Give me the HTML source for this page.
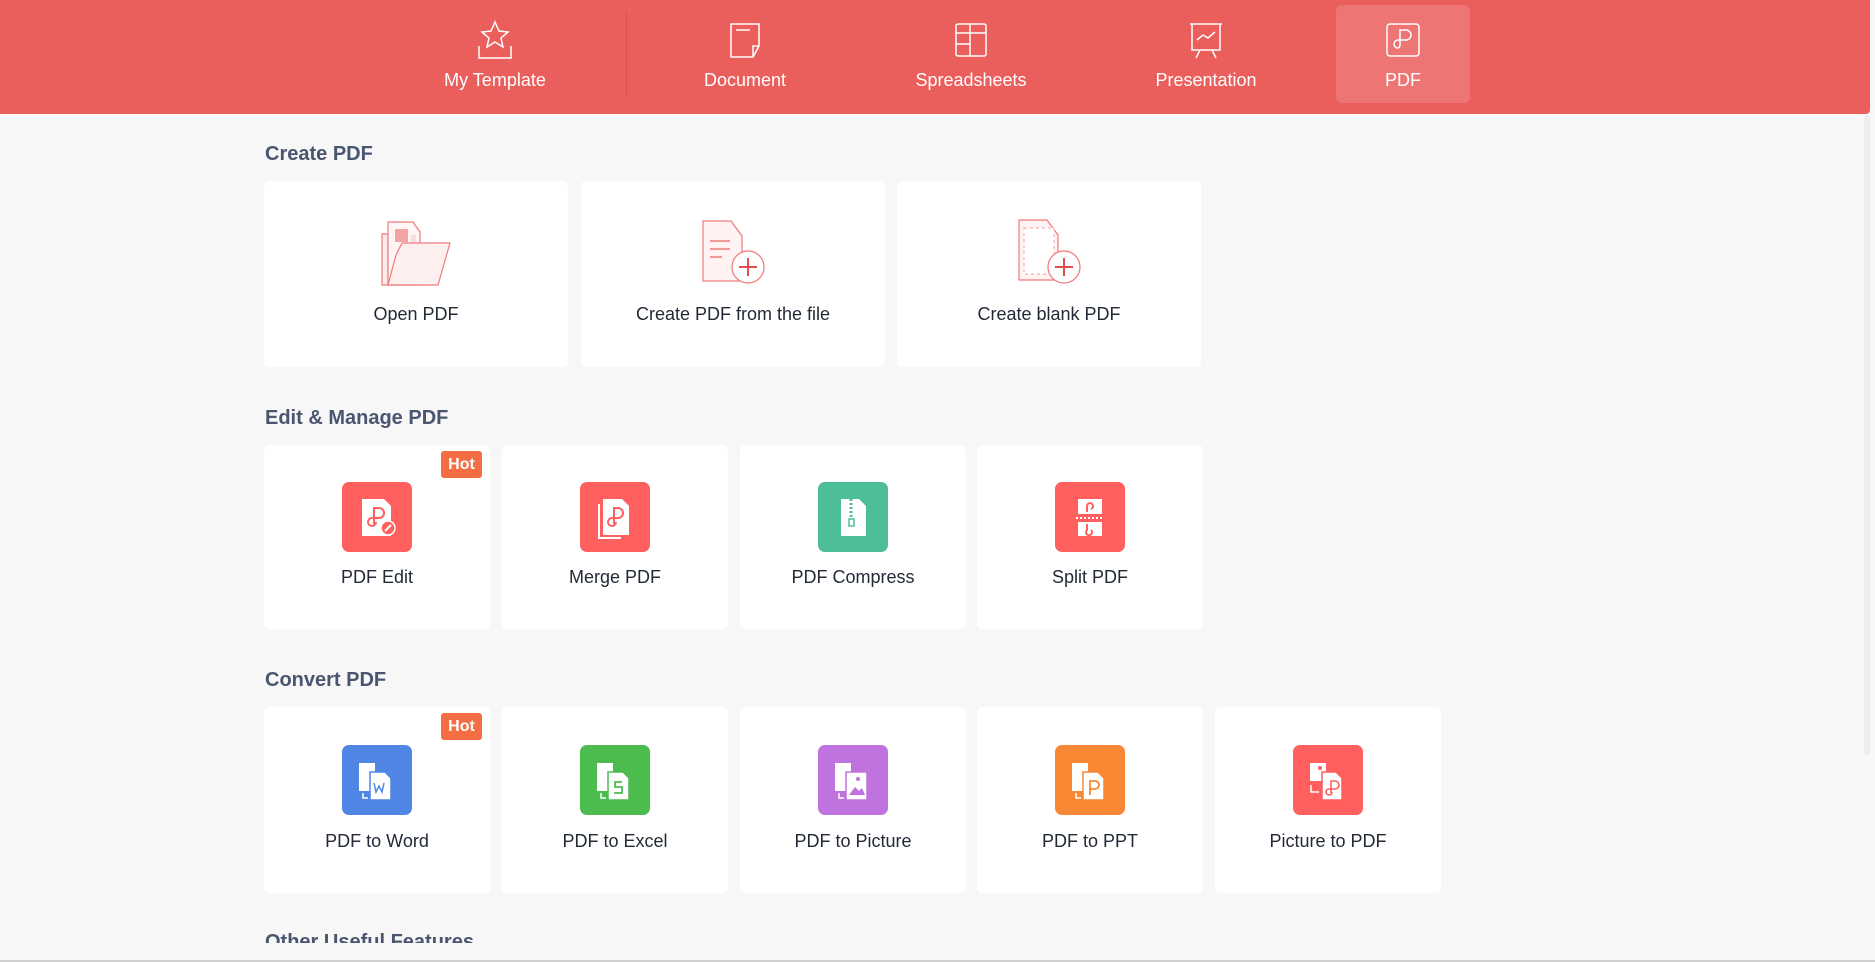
<!DOCTYPE html>
<html><head><meta charset="utf-8">
<style>
*{margin:0;padding:0;box-sizing:border-box}
html,body{width:1875px;height:962px;overflow:hidden;background:#f7f7f7;font-family:"Liberation Sans","DejaVu Sans",sans-serif}
#hdr{position:absolute;left:0;top:0;width:1870px;height:114px;background:#ea5e5c;border-bottom-right-radius:4px}
.nav{position:absolute;top:5px;height:98px;width:134px;color:#fff;text-align:center;font-size:18px}
.nav svg{position:absolute;left:50%;top:15px;margin-left:-17px}
.nav span{position:absolute;left:0;right:0;top:65px}
.nav.on{background:rgba(255,255,255,.15);border-radius:6px}
#div{position:absolute;left:626px;top:12px;width:1px;height:84px;background:rgba(0,0,0,.1)}
h2{position:absolute;left:265px;font-size:20px;font-weight:bold;color:#4a5670}
.card{position:absolute;background:#fff;border-radius:5px}
.card .lbl{position:absolute;left:0;right:0;text-align:center;font-size:18px;color:#222a36}
.ic{position:absolute;width:70px;height:70px;border-radius:7px;left:50%;margin-left:-35px;top:37px}
.ic svg{position:absolute;left:0;top:0}
.hot{position:absolute;right:8px;top:6px;width:41px;height:27px;background:#f46d43;border-radius:3px;color:#fff;font-size:16px;font-weight:bold;text-align:center;line-height:27px}
#sb{position:absolute;left:1864px;top:115px;width:6px;height:640px;background:#eee;border-radius:3px}
#bot{position:absolute;left:0;top:960px;width:1875px;height:2px;background:#d0d0d0}
</style></head><body>
<div id="hdr">
 <div class="nav" style="left:428px"><svg width="34" height="40" viewBox="0 0 34 40" fill="none" stroke="#fff" stroke-width="1.5"><path d="M17 2l4 9 9 1-7 6 2 9-8-5-8 5 2-9-7-6 9-1z"/><path d="M1 26v12h32V26"/></svg><span>My Template</span></div>
 <div id="div"></div>
 <div class="nav" style="left:678px"><svg width="34" height="40" viewBox="0 0 34 40" fill="none" stroke="#fff" stroke-width="1.5"><path d="M3 4h28v22l-6 11H3z"/><path d="M31 26h-6v11"/><path d="M8 10h14"/></svg><span>Document</span></div>
 <div class="nav" style="left:904px"><svg width="34" height="40" viewBox="0 0 34 40" fill="none" stroke="#fff" stroke-width="1.5"><rect x="2" y="4" width="30" height="32" rx="2"/><path d="M2 13h30M2 24h14M16 4v32"/></svg><span>Spreadsheets</span></div>
 <div class="nav" style="left:1139px"><svg width="34" height="40" viewBox="0 0 34 40" fill="none" stroke="#fff" stroke-width="1.5"><path d="M1 4h32M3 4v26h28V4M11 30l-4 8M23 30l4 8"/><path d="M8 20l6-5 5 3 7-6"/></svg><span>Presentation</span></div>
 <div class="nav on" style="left:1336px"><svg width="34" height="40" viewBox="0 0 34 40" fill="none" stroke="#fff" stroke-width="1.5"><rect x="1" y="4" width="32" height="32" rx="3"/><path d="M14 26V10h6a5 5 0 010 10h-8a4 4 0 100 8 4 4 0 002-4"/></svg><span>PDF</span></div>
</div>

<h2 style="top:143px">Create PDF</h2>
<div class="card" style="left:264px;top:181px;width:304px;height:186px">
 <svg style="position:absolute;left:115px;top:38px" width="74" height="68" viewBox="0 0 74 68" fill="#fdeaea" stroke="#ef7a7a" stroke-width="1.2"><path d="M3 15h6v51H3z"/><path d="M9 3h25l7 10v53H9z" fill="#fff5f5"/><rect x="16" y="10" width="13" height="13" fill="#f4a3a3" stroke="none"/><rect x="32" y="16" width="5" height="7" fill="#fadcdc" stroke="none"/><path d="M17 36l6-12h48l-12 42H9z" fill="#fff0f0"/></svg>
 <div class="lbl" style="top:123px">Open PDF</div>
</div>
<div class="card" style="left:581px;top:181px;width:304px;height:186px">
 <svg style="position:absolute;left:120px;top:38px" width="70" height="68" viewBox="0 0 70 68" fill="#fff2f2" stroke="#ef7a7a" stroke-width="1.2"><path d="M2 2h28l11 15v45H2z"/><path d="M9 22h20M9 30h20M9 38h12" stroke="#ef7a7a" stroke-width="1.5"/><circle cx="47" cy="48" r="16" fill="#fff"/><path d="M47 39v18M38 48h18" stroke="#e54b4b" stroke-width="2"/></svg>
 <div class="lbl" style="top:123px">Create PDF from the file</div>
</div>
<div class="card" style="left:897px;top:181px;width:304px;height:186px">
 <svg style="position:absolute;left:120px;top:36px" width="70" height="70" viewBox="0 0 70 70" fill="#fff2f2" stroke="#ef7a7a" stroke-width="1.2"><path d="M2 3h28l11 15v45H2z"/><rect x="7" y="11" width="30" height="46" fill="#fff" stroke="#f5b5b5" stroke-dasharray="3 3"/><circle cx="47" cy="50" r="16" fill="#fff"/><path d="M47 41v18M38 50h18" stroke="#e54b4b" stroke-width="2"/></svg>
 <div class="lbl" style="top:123px">Create blank PDF</div>
</div>

<h2 style="top:407px">Edit &amp; Manage PDF</h2>
<div class="card" style="left:264px;top:445px;width:226px;height:184px">
 <div class="ic" style="background:#ff5f5f"><svg width="70" height="70"><path d="M20 17h22l7 7v30H20z" fill="#fff"/><path d="M32 42V26h5a5 5 0 010 10h-7a4 4 0 104 4" fill="none" stroke="#ff5f5f" stroke-width="2"/><circle cx="46" cy="46" r="7" fill="#ff5f5f" stroke="#fff" stroke-width="1.5"/><path d="M43 49l6-6" stroke="#fff" stroke-width="2"/></svg></div>
 <div class="hot">Hot</div>
 <div class="lbl" style="top:122px">PDF Edit</div>
</div>
<div class="card" style="left:502px;top:445px;width:226px;height:184px">
 <div class="ic" style="background:#ff5f5f"><svg width="70" height="70"><path d="M19 22v34h22" fill="none" stroke="#fff" stroke-width="2"/><path d="M23 17h19l7 7v29H23z" fill="#fff"/><path d="M34 42V26h4a5 5 0 010 10h-6a4 4 0 104 4" fill="none" stroke="#ff5f5f" stroke-width="2"/></svg></div>
 <div class="lbl" style="top:122px">Merge PDF</div>
</div>
<div class="card" style="left:740px;top:445px;width:226px;height:184px">
 <div class="ic" style="background:#4dbe99"><svg width="70" height="70"><path d="M23 17h18l7 7v30H23z" fill="#fff"/><path d="M33 17v20" stroke="#4dbe99" stroke-width="3" stroke-dasharray="2 2"/><rect x="31" y="37" width="5" height="7" fill="none" stroke="#4dbe99" stroke-width="1.5"/></svg></div>
 <div class="lbl" style="top:122px">PDF Compress</div>
</div>
<div class="card" style="left:977px;top:445px;width:226px;height:184px">
 <div class="ic" style="background:#ff5f5f"><svg width="70" height="70"><path d="M23 17h24v15H23zM23 40h24v14H23z" fill="#fff"/><path d="M21 36h28" stroke="#fff" stroke-width="2" stroke-dasharray="2 2"/><path d="M32 30v-6a3 3 0 114 3M32 42v6a3 3 0 104 0" fill="none" stroke="#ff5f5f" stroke-width="2"/></svg></div>
 <div class="lbl" style="top:122px">Split PDF</div>
</div>

<h2 style="top:669px">Convert PDF</h2>
<div class="card" style="left:264px;top:707px;width:226px;height:186px">
 <div class="ic" style="background:#4f86e5;top:38px"><svg width="70" height="70"><path d="M17 18h16v28H17z" fill="#fff"/><path d="M28 27h15l6 6v22H28z" fill="#fff" stroke="#4f86e5" stroke-width="1.5"/><path d="M32 38l2 9 3-6 3 6 2-9" fill="none" stroke="#4f86e5" stroke-width="1.5"/><path d="M21 48v5h5" fill="none" stroke="#fff" stroke-width="1.5"/></svg></div>
 <div class="hot">Hot</div>
 <div class="lbl" style="top:124px">PDF to Word</div>
</div>
<div class="card" style="left:502px;top:707px;width:226px;height:186px">
 <div class="ic" style="background:#4cbc4e;top:38px"><svg width="70" height="70"><path d="M17 18h16v28H17z" fill="#fff"/><path d="M28 27h15l6 6v22H28z" fill="#fff" stroke="#4cbc4e" stroke-width="1.5"/><path d="M42 37h-7v5h7v6h-8" fill="none" stroke="#4cbc4e" stroke-width="1.8"/><path d="M21 48v5h5" fill="none" stroke="#fff" stroke-width="1.5"/></svg></div>
 <div class="lbl" style="top:124px">PDF to Excel</div>
</div>
<div class="card" style="left:740px;top:707px;width:226px;height:186px">
 <div class="ic" style="background:#bf73de;top:38px"><svg width="70" height="70"><path d="M17 18h16v28H17z" fill="#fff"/><path d="M28 27h21v28H28z" fill="#fff" stroke="#bf73de" stroke-width="1.5"/><path d="M31 50l6-8 4 4 3-3 3 7z" fill="#bf73de"/><circle cx="40" cy="34" r="2" fill="#bf73de"/><path d="M21 48v5h5" fill="none" stroke="#fff" stroke-width="1.5"/></svg></div>
 <div class="lbl" style="top:124px">PDF to Picture</div>
</div>
<div class="card" style="left:977px;top:707px;width:226px;height:186px">
 <div class="ic" style="background:#f78733;top:38px"><svg width="70" height="70"><path d="M17 18h16v28H17z" fill="#fff"/><path d="M28 27h15l6 6v22H28z" fill="#fff" stroke="#f78733" stroke-width="1.5"/><path d="M35 50V36h5a4 4 0 010 8h-5" fill="none" stroke="#f78733" stroke-width="1.8"/><path d="M21 48v5h5" fill="none" stroke="#fff" stroke-width="1.5"/></svg></div>
 <div class="lbl" style="top:124px">PDF to PPT</div>
</div>
<div class="card" style="left:1215px;top:707px;width:226px;height:186px">
 <div class="ic" style="background:#ff5f5f;top:38px"><svg width="70" height="70"><path d="M17 18h16v18H17z" fill="#fff"/><circle cx="27" cy="23" r="2" fill="#ff5f5f"/><path d="M29 27h14l6 6v22H29z" fill="#fff" stroke="#ff5f5f" stroke-width="1.5"/><path d="M38 48V36h4a4 4 0 010 8h-6a3 3 0 103 3" fill="none" stroke="#ff5f5f" stroke-width="1.6"/><path d="M18 40v7h8" fill="none" stroke="#fff" stroke-width="1.5"/></svg></div>
 <div class="lbl" style="top:124px">Picture to PDF</div>
</div>

<div style="position:absolute;left:0;top:920px;width:1860px;height:23px;overflow:hidden"><h2 style="top:11px">Other Useful Features</h2></div>
<div id="sb"></div>
<div id="bot"></div>
</body></html>
